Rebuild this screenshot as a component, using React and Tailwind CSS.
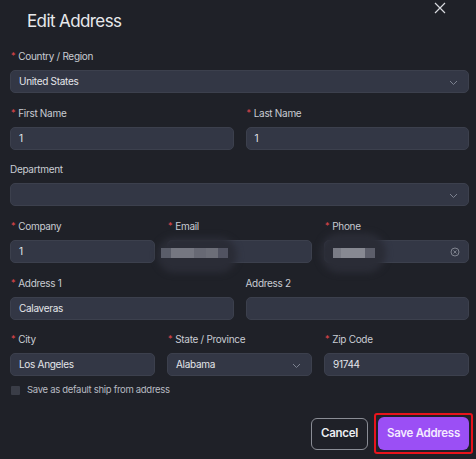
import React from "react";

const font = { fontFamily: "Inter, 'Liberation Sans', sans-serif" };

function Label({ children, req }) {
  return (
    <div className="flex items-center h-[14px] text-[10px] text-[#c9ccd3] tracking-[-0.3px] mb-[7px]">
      {req && <span className="text-[#e5484d] text-[9px] mr-[3px] ml-[1px]">*</span>}
      <span>{children}</span>
    </div>
  );
}

function Chevron() {
  return (
    <svg width="9" height="6" viewBox="0 0 9 6" className="absolute right-[10px] top-[9px]">
      <path d="M1 1l3.5 3.5L8 1" fill="none" stroke="#7d8290" strokeWidth="1" />
    </svg>
  );
}

function Input({ value, select, extra }) {
  return (
    <div className="relative h-[23px] rounded-[5px] bg-[#333745] border border-[#3c404d] flex items-center pl-[8px] text-[10px] text-[#e4e6ea] tracking-[-0.3px]">
      {value}
      {select && <Chevron />}
      {extra}
    </div>
  );
}

function Blur({ className }) {
  return (
    <div className={"absolute pointer-events-none " + className}>
      <div className="absolute inset-0 rounded-full bg-[#2a2c36] blur-[3px]" />
    </div>
  );
}

export default function App() {
  return (
    <div style={font} className="w-[476px] h-[459px] bg-[#1f2128] relative overflow-hidden">
      <div className="absolute right-[30px] top-[2px] text-[#d7d9de]">
        <svg width="12" height="12" viewBox="0 0 12 12">
          <path d="M1 1l10 10M11 1L1 11" stroke="currentColor" strokeWidth="1.2" fill="none" />
        </svg>
      </div>
      <div className="pl-[27px] pt-[9px] h-[49px] text-[17px] text-[#e8e9ec] tracking-[-0.6px]">
        Edit Address
      </div>
      <div className="pl-[10px] pr-[7px] flex flex-col">
        <div>
          <Label req>Country / Region</Label>
          <Input value="United States" select />
        </div>
        <div className="grid grid-cols-2 gap-x-[12px] mt-[13px]">
          <div>
            <Label req>First Name</Label>
            <Input value="1" />
          </div>
          <div>
            <Label req>Last Name</Label>
            <Input value="1" />
          </div>
        </div>
        <div className="mt-[12px]">
          <Label>Department</Label>
          <Input value="" select />
        </div>
        <div className="grid grid-cols-3 gap-x-[12px] mt-[13px]">
          <div>
            <Label req>Company</Label>
            <Input value="1" />
          </div>
          <div className="relative">
            <Label req>Email</Label>
            <Input value="" />
            <Blur className="left-[-10px] top-[18px] w-[80px] h-[36px]" />
            <div className="absolute left-[-6px] top-[29px] flex h-[10px] opacity-90 blur-[0.5px]">
              <div className="w-[10px] bg-[#60636f]" />
              <div className="w-[23px] bg-[#7e808a]" />
              <div className="w-[12px] bg-[#6e707b]" />
              <div className="w-[12px] bg-[#747680]" />
              <div className="w-[10px] bg-[#565866]" />
            </div>
          </div>
          <div className="relative">
            <Label req>Phone</Label>
            <Input
              value=""
              extra={
                <svg width="10" height="10" viewBox="0 0 10 10" className="absolute right-[8px] top-[6px]">
                  <circle cx="5" cy="5" r="4" fill="none" stroke="#80848f" strokeWidth="1" />
                  <path d="M3.5 3.5l3 3M6.5 3.5l-3 3" stroke="#80848f" strokeWidth="0.9" />
                </svg>
              }
            />
            <Blur className="left-[-4px] top-[14px] w-[66px] h-[40px]" />
            <div className="absolute left-[9px] top-[29px] flex h-[10px] blur-[0.5px]">
              <div className="w-[8px] bg-[#7a7c86]" />
              <div className="w-[24px] bg-[#878992]" />
              <div className="w-[10px] bg-[#5c5e6a]" />
            </div>
          </div>
        </div>
        <div className="grid grid-cols-2 gap-x-[12px] mt-[13px]">
          <div>
            <Label req>Address 1</Label>
            <Input value="Calaveras" />
          </div>
          <div>
            <Label>Address 2</Label>
            <Input value="" />
          </div>
        </div>
        <div className="grid grid-cols-3 gap-x-[12px] mt-[12px]">
          <div>
            <Label req>City</Label>
            <Input value="Los Angeles" />
          </div>
          <div>
            <Label req>State / Province</Label>
            <Input value="Alabama" select />
          </div>
          <div>
            <Label req>Zip Code</Label>
            <Input value="91744" />
          </div>
        </div>
        <div className="flex items-center mt-[7px] h-[14px]">
          <div className="w-[9px] h-[9px] bg-[#3a3d47] rounded-[1px] ml-[1px]" />
          <span className="ml-[7px] text-[9.5px] text-[#b8bbc2] tracking-[-0.3px]">
            Save as default ship from address
          </span>
        </div>
        <div className="flex justify-end items-center mt-[20px] gap-[10px]">
          <div className="w-[57px] h-[32px] rounded-[6px] border border-[#8a8d95] flex items-center justify-center text-[11.5px] font-semibold text-[#eceef1] tracking-[-0.3px]">
            Cancel
          </div>
          <div className="relative">
            <div className="absolute -inset-[4px] border-2 border-[#e8141c] rounded-[3px] pointer-events-none" />
            <div className="w-[91px] h-[33px] rounded-[6px] bg-[#9b4ff5] flex items-center justify-center text-[11.5px] font-semibold text-[#f3eaff] tracking-[-0.3px]">
              Save Address
            </div>
          </div>
        </div>
      </div>
    </div>
  );
}
